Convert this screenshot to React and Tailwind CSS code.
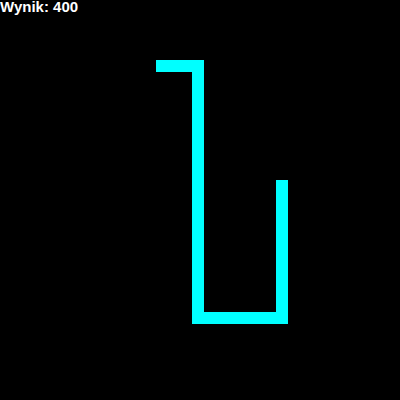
export default function App() {
  return (
    <div className="relative w-[400px] h-[400px] bg-black overflow-hidden">
      <svg width="400" height="400" className="block">
        <rect x="156" y="60" width="48" height="12" fill="#00ffff" />
        <rect x="192" y="60" width="12" height="264" fill="#00ffff" />
        <rect x="192" y="312" width="96" height="12" fill="#00ffff" />
        <rect x="276" y="180" width="12" height="144" fill="#00ffff" />
      </svg>
      <div className="absolute left-0 top-0 text-white font-bold text-[15px] leading-[14px] [font-family:'Liberation_Sans',Arial,sans-serif]">
        Wynik: 400
      </div>
    </div>
  );
}
